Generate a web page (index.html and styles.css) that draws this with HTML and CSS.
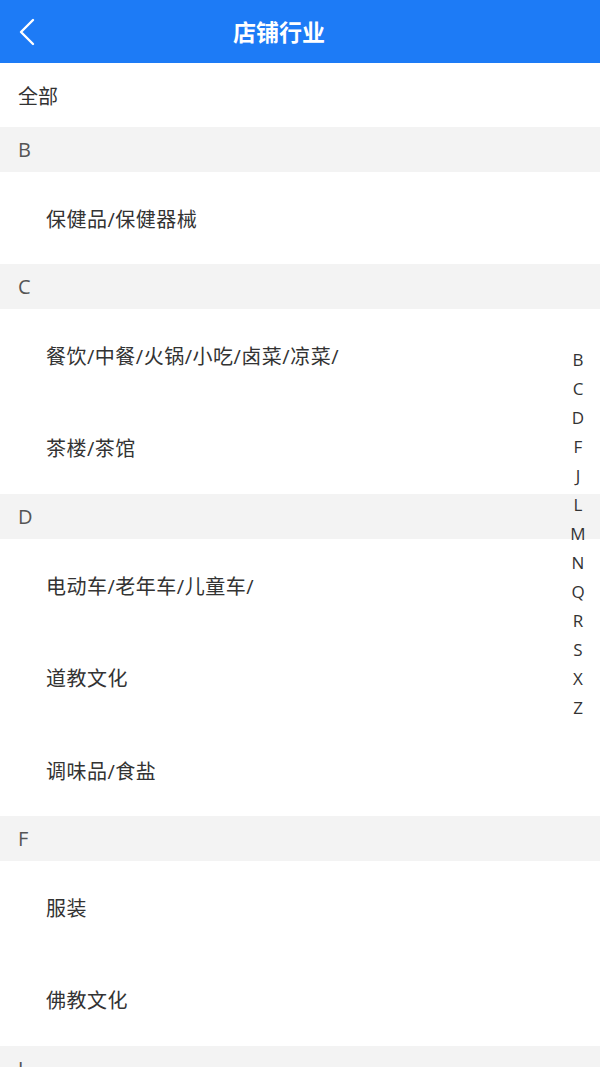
FILE: index.html
```html
<!DOCTYPE html>
<html lang="zh-CN">
<head>
<meta charset="utf-8">
<title>店铺行业</title>
<link rel="stylesheet" href="styles.css">
</head>
<body>
<div class="page">
  <header class="topbar">
    <span class="back">
      <svg width="20" height="30" viewBox="0 0 20 30"><path d="M15 3 L3 15 L15 27" fill="none" stroke="#fff" stroke-width="2.4" stroke-linecap="round" stroke-linejoin="round"/></svg>
    </span>
    <h1 class="title">店铺行业</h1>
  </header>
  <div class="all">全部</div>
  <div class="sec">B</div>
  <div class="item">保健品/保健器械</div>
  <div class="sec">C</div>
  <div class="item">餐饮/中餐/火锅/小吃/卤菜/凉菜/</div>
  <div class="item">茶楼/茶馆</div>
  <div class="sec">D</div>
  <div class="item">电动车/老年车/儿童车/</div>
  <div class="item">道教文化</div>
  <div class="item">调味品/食盐</div>
  <div class="sec">F</div>
  <div class="item">服装</div>
  <div class="item">佛教文化</div>
  <div class="sec">J</div>
  <nav class="index">
    <span>B</span><span>C</span><span>D</span><span>F</span><span>J</span><span>L</span><span>M</span><span>N</span><span>Q</span><span>R</span><span>S</span><span>X</span><span>Z</span>
  </nav>
</div>
</body>
</html>
```
FILE: styles.css
```css
html, body {
  margin: 0;
  padding: 0;
  background: #fff;
}
body {
  font-family: "Open Sans", "Noto Sans CJK SC", sans-serif;
  color: #333;
}
.page {
  width: 600px;
  height: 1067px;
  overflow: hidden;
  position: relative;
}
.topbar {
  height: 63px;
  background: #1d7bf6;
  display: flex;
  align-items: center;
}
.back {
  display: flex;
  align-items: center;
  padding-left: 18px;
  width: 40px;
}
.title {
  margin: 0;
  flex: 1;
  text-align: center;
  padding-right: 100px;
  color: #fff;
  font-size: 23px;
  font-weight: 700;
  font-family: "Noto Sans CJK SC", sans-serif;
  line-height: 63px;
}
.all {
  height: 64px;
  display: flex;
  align-items: center;
  padding-left: 18px;
  font-size: 20px;
  color: #333;
}
.sec {
  height: 45px;
  display: flex;
  align-items: center;
  padding-left: 18px;
  background: #f3f3f3;
  font-size: 20px;
  color: #555;
}
.item {
  height: 92.4px;
  display: flex;
  align-items: center;
  padding-left: 46px;
  font-size: 20px;
  letter-spacing: 0.5px;
  color: #333;
}
.index {
  position: absolute;
  right: 8px;
  top: 345px;
  width: 28px;
  display: flex;
  flex-direction: column;
  align-items: center;
}
.index span {
  height: 29px;
  line-height: 29px;
  font-size: 17px;
  color: #333;
}
```
